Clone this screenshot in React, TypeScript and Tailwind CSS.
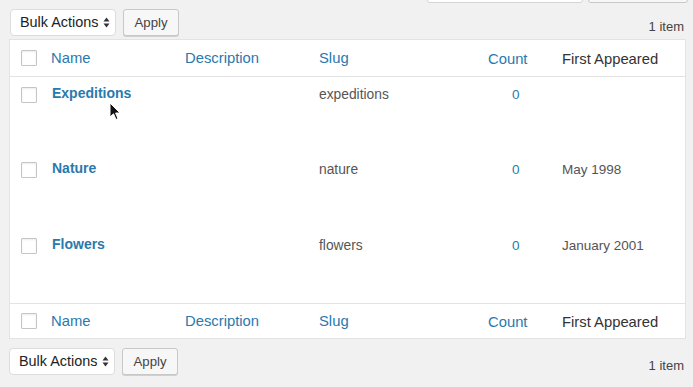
import React from "react";

const font = { fontFamily: '"Liberation Sans", Arial, sans-serif' };

function Arrows() {
  return (
    <svg width="7" height="11" viewBox="0 0 7 11" className="ml-[5px]">
      <path d="M3.5 0.5 L6.5 4.5 L0.5 4.5 Z" fill="#333" />
      <path d="M3.5 10.5 L6.5 6.5 L0.5 6.5 Z" fill="#333" />
    </svg>
  );
}

function Nav({ bottom }: { bottom?: boolean }) {
  return (
    <div className={`flex items-center h-[27px] ${bottom ? "pl-[9px]" : "pl-[10px]"} pr-[9px]`}>
      <div className="flex items-center h-[27px] w-[106px] pl-[9px] bg-white border border-[#dcdcdc] rounded-[4px] text-[14.4px] text-[#222]">
        Bulk Actions
        <Arrows />
      </div>
      <div className="ml-[7px] flex items-center justify-center h-[27px] w-[56px] bg-[#f7f7f7] border border-[#c8c8c8] rounded-[3px] shadow-[0_1px_0_#d0d0d0] text-[13.2px] text-[#444]">
        Apply
      </div>
      <div className="ml-auto mt-[8px] text-[13px] text-[#444]">1 item</div>
    </div>
  );
}

function Checkbox() {
  return (
    <div className="w-[16px] h-[16px] bg-white border border-[#c3c6c9] rounded-[1px] shadow-[inset_0_1px_2px_rgba(0,0,0,0.08)]" />
  );
}

function HeaderRow({ footer }: { footer?: boolean }) {
  return (
    <div
      className={`flex items-center ${footer ? "h-[35px] border-t" : "h-[37px] border-b"} border-[#e3e3e3] text-[14.8px] text-[#2a79ad]`}
    >
      <div className="w-[41px] pl-[11px] flex items-center">
        <Checkbox />
      </div>
      <div className="w-[134px]">Name</div>
      <div className="w-[134px]">Description</div>
      <div className="w-[151px]">Slug</div>
      <div className="w-[92px] pl-[18px] pt-[3px]">Count</div>
      <div className="flex-1 pt-[3px] text-[#333]">First Appeared</div>
    </div>
  );
}

const rows = [
  { name: "Expeditions", slug: "expeditions", date: "", h: "h-[75px]" },
  { name: "Nature", slug: "nature", date: "May 1998", h: "h-[76px]" },
  { name: "Flowers", slug: "flowers", date: "January 2001", h: "h-[75px]" },
];

export default function App() {
  return (
    <div className="relative w-[693px] h-[387px] bg-[#f1f1f1] overflow-hidden" style={font}>
      <div className="h-[3px] overflow-hidden flex items-end justify-end pr-[5px]">
        <div className="w-[156px] h-[28px] bg-white border border-[#d5d5d5] rounded-[3px]" />
        <div className="ml-[5px] w-[100px] h-[28px] bg-[#f7f7f7] border border-[#c8c8c8] rounded-[3px]" />
      </div>
      <div className="mt-[6px]">
        <Nav />
      </div>
      <div className="mt-[3px] ml-[9px] w-[677px] bg-white border border-[#e3e3e3]">
        <HeaderRow />
        {rows.map((r) => (
          <div key={r.name} className={`flex items-start ${r.h}`}>
            <div className="w-[41px] pl-[11px] pt-[10px]">
              <Checkbox />
            </div>
            <div className="w-[134px] pl-[1px] pt-[6px] leading-[20px] text-[14px] font-bold text-[#2a79ad]">
              {r.name}
            </div>
            <div className="w-[134px]" />
            <div className="w-[151px] pt-[8px] leading-[20px] text-[13.8px] text-[#555]">{r.slug}</div>
            <div className="w-[92px] pl-[42px] pt-[8px] leading-[20px] text-[13.5px] text-[#2a79ad]">0</div>
            <div className="flex-1 pt-[8px] leading-[20px] text-[13.5px] text-[#555]">{r.date}</div>
          </div>
        ))}
        <HeaderRow footer />
      </div>
      <div className="mt-[9px]">
        <Nav bottom />
      </div>
      <svg
        className="absolute left-[109px] top-[102px]"
        width="13"
        height="19"
        viewBox="0 0 13 19"
      >
        <path
          d="M1 1 L1 15 L4.5 11.8 L7 17.5 L9 16.6 L6.6 11 L11 11 Z"
          fill="#111"
          stroke="#fff"
          strokeWidth="1"
          strokeLinejoin="round"
        />
      </svg>
    </div>
  );
}
